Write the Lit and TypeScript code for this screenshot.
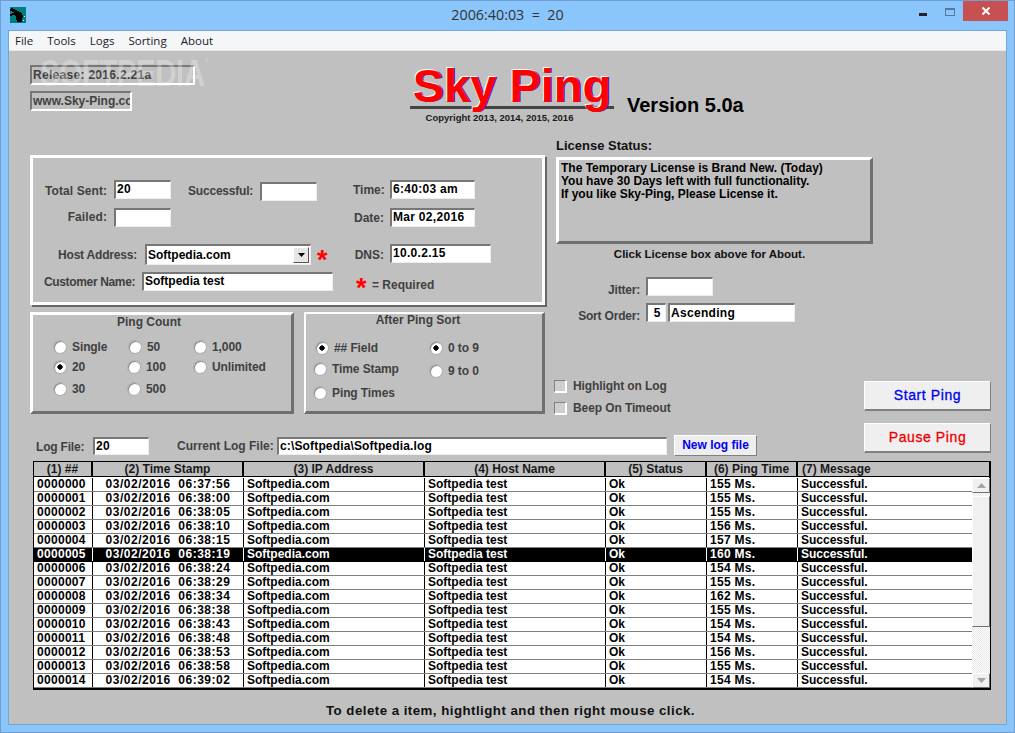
import { LitElement, html, css } from 'lit';
import { customElement } from 'lit/decorators.js';
import { classMap } from 'lit/directives/class-map.js';

const ROWS = [
  ['0000000', '03/02/2016  06:37:56', '155 Ms.'],
  ['0000001', '03/02/2016  06:38:00', '155 Ms.'],
  ['0000002', '03/02/2016  06:38:05', '155 Ms.'],
  ['0000003', '03/02/2016  06:38:10', '156 Ms.'],
  ['0000004', '03/02/2016  06:38:15', '157 Ms.'],
  ['0000005', '03/02/2016  06:38:19', '160 Ms.'],
  ['0000006', '03/02/2016  06:38:24', '154 Ms.'],
  ['0000007', '03/02/2016  06:38:29', '155 Ms.'],
  ['0000008', '03/02/2016  06:38:34', '162 Ms.'],
  ['0000009', '03/02/2016  06:38:38', '155 Ms.'],
  ['0000010', '03/02/2016  06:38:43', '154 Ms.'],
  ['0000011', '03/02/2016  06:38:48', '154 Ms.'],
  ['0000012', '03/02/2016  06:38:53', '156 Ms.'],
  ['0000013', '03/02/2016  06:38:58', '155 Ms.'],
  ['0000014', '03/02/2016  06:39:02', '154 Ms.'],
];

@customElement('app-root')
export class AppRoot extends LitElement {
  static styles = css`
    :host {
      display: block;
      width: 1015px;
      height: 733px;
      overflow: hidden;
      font-family: 'Liberation Sans', Arial, sans-serif;
      font-size: 12px;
      font-weight: 700;
      color: #000;
    }
    .dig {
      letter-spacing: 0.3px;
    }
    .window {
      box-sizing: border-box;
      width: 1015px;
      height: 733px;
      background: #8ac6fb;
      border: 1px solid #6e9fd0;
      display: flex;
      flex-direction: column;
      position: relative;
    }
    .titlebar {
      height: 29px;
      flex: none;
      display: flex;
      align-items: flex-start;
      padding-left: 9px;
    }
    .app-icon {
      width: 16px;
      height: 16px;
      margin-top: 6px;
      flex: none;
    }
    .title {
      flex: 1;
      text-align: center;
      margin: 4px 0 0 70px;
      font-family: 'Open Sans', 'Noto Sans', sans-serif;
      font-size: 14.3px;
      font-weight: 400;
      line-height: 20px;
      color: #333;
      white-space: pre;
    }
    .controls {
      display: flex;
      flex: none;
      align-items: flex-start;
      margin-right: 6px;
    }
    .min {
      width: 8px;
      height: 3px;
      background: #222;
      margin: 12px 18px 0 0;
    }
    .max {
      box-sizing: border-box;
      width: 10px;
      height: 8px;
      border: 1px solid #55789a;
      border-top-width: 2px;
      margin: 7px 8px 0 0;
    }
    .close {
      width: 45px;
      height: 20px;
      background: #c75050;
      display: flex;
      align-items: center;
      justify-content: center;
    }
    .client {
      flex: 1;
      margin: 0 7px 7px 7px;
      border: 1px solid #76a5d6;
      background: #c0c0c0;
      display: flex;
      flex-direction: column;
      min-height: 0;
    }
    .menu {
      height: 19px;
      flex: none;
      background: #f5f6f7;
      border-bottom: 1px solid #e8e8e8;
      display: flex;
      gap: 14px;
      padding-left: 6px;
      align-items: center;
      font-family: 'Open Sans', 'Noto Sans', sans-serif;
      font-size: 11.5px;
      font-weight: 400;
      color: #1a1a2a;
    }
    .form {
      position: relative;
      flex: 1;
      padding: 14px 15px 0 21px;
    }
    .watermark {
      position: absolute;
      left: 31px;
      top: 3px;
      font-size: 36px;
      line-height: 40px;
      letter-spacing: -0.6px;
      color: rgba(255, 255, 255, 0.28);
      pointer-events: none;
      display: flex;
      transform: scaleX(0.82);
      transform-origin: left top;
    }
    .watermark small {
      font-size: 8px;
      line-height: 14px;
      font-weight: 400;
      letter-spacing: 0;
    }
    .header {
      height: 73px;
      display: flex;
    }
    .badges {
      width: 379px;
      flex: none;
      display: flex;
      flex-direction: column;
      gap: 6px;
    }
    .badge {
      box-sizing: border-box;
      height: 20px;
      border: 2px solid;
      border-color: #777 #fff #fff #777;
      color: #404040;
      padding-left: 1px;
      line-height: 16px;
      overflow: hidden;
      white-space: nowrap;
    }
    .badge.release {
      width: 165px;
    }
    .badge.site {
      width: 102px;
    }
    .logo {
      width: 206px;
      flex: none;
      text-align: center;
      display: flex;
      flex-direction: column;
      align-items: center;
      position: relative;
      margin-right: 12px;
    }
    .logo::before {
      content: '';
      position: absolute;
      left: 1px;
      top: 41px;
      width: 204px;
      height: 3px;
      background: #444;
    }
    .sky {
      position: relative;
      font-size: 47px;
      line-height: 46px;
      margin-top: -2px;
      color: #f00;
      text-shadow: -1px -1px 0 #fff, 1px 0 0 #2a00c0;
      white-space: nowrap;
    }
    .copy {
      font-size: 9.5px;
      line-height: 12px;
      margin: 3px 25px 0 0;
      color: #1a1a1a;
    }
    .version {
      font-size: 20px;
      line-height: 22px;
      margin-top: 29px;
      color: #000;
    }
    .main {
      display: flex;
    }
    .upper {
      width: 834px;
      flex: none;
    }
    .columns {
      display: flex;
      height: 297px;
    }
    .left {
      width: 516px;
      flex: none;
      margin-right: 10px;
      padding-top: 17px;
    }
    .lbl {
      color: #404040;
      white-space: nowrap;
      flex: none;
    }
    .input {
      box-sizing: border-box;
      height: 19px;
      background: #fff;
      border: 2px solid;
      border-color: #777 #eee #eee #777;
      border-right-width: 1px;
      border-bottom-width: 1px;
      color: #000;
      line-height: 15px;
      padding-left: 1px;
      white-space: nowrap;
      overflow: hidden;
      flex: none;
    }
    .status {
      box-sizing: border-box;
      width: 515px;
      height: 150px;
      background: #c0c0c0;
      border: 3px solid #fff;
      box-shadow: 2px 2px 0 #666;
      display: flex;
    }
    .status-left {
      width: 320px;
      flex: none;
      padding-top: 22px;
    }
    .status-right {
      padding-top: 22px;
    }
    .row {
      display: flex;
      align-items: center;
    }
    .status-left .row {
      height: 18px;
    }
    .r-sent {
      padding-left: 12px;
    }
    .r-failed {
      margin-top: 10px;
      padding-left: 12px;
    }
    .w-label-a {
      width: 62px;
      text-align: right;
      margin-right: 7px;
      letter-spacing: 0.1px;
    }
    .r-sent .lbl {
      margin-top: 4px;
    }
    .w-56 {
      width: 57px;
    }
    .r-sent .low {
      margin-top: 4px;
    }
    .r-sent .succ {
      margin: 4px 7px 0 17px;
      width: 65px;
      letter-spacing: -0.2px;
    }
    .status-left .r-host {
      height: 21px;
      margin-top: 18px;
    }
    .host-label {
      width: 104px;
      text-align: right;
      margin-right: 8px;
      letter-spacing: -0.2px;
    }
    .combo {
      box-sizing: border-box;
      width: 166px;
      height: 21px;
      background: #fff;
      border: 2px solid;
      border-color: #777 #eee #eee #777;
      border-right-width: 1px;
      border-bottom-width: 1px;
      display: flex;
      align-items: center;
      flex: none;
    }
    .combo span {
      flex: 1;
      padding: 0 0 1px 1px;
    }
    .combo-btn {
      box-sizing: border-box;
      width: 16px;
      height: 16px;
      margin-right: 1px;
      background: #e6e6e6;
      border: 1px solid;
      border-color: #fff #555 #555 #fff;
      display: flex;
      align-items: center;
      justify-content: center;
    }
    .star {
      color: #f00;
      font-size: 27px;
      line-height: 19px;
      height: 13px;
      width: 13px;
      flex: none;
      overflow: visible;
    }
    .star-host {
      margin: 6px 0 0 6px;
    }
    .status-left .r-customer {
      height: 19px;
      margin-top: 7px;
      padding-left: 11px;
    }
    .cust-label {
      width: 91px;
      margin-right: 7px;
      letter-spacing: -0.35px;
    }
    .w-191 {
      width: 191px;
    }
    .status-right .row {
      height: 18px;
    }
    .time-label {
      width: 31px;
      text-align: right;
      margin: 2px 6px 0 0;
    }
    .w-85 {
      width: 85px;
    }
    .w-101 {
      width: 101px;
    }
    .status-right .r-date {
      margin-top: 10px;
    }
    .status-right .r-dns {
      margin-top: 18px;
      height: 19px;
    }
    .status-right .r-req {
      margin-top: 13px;
      padding-left: 3px;
    }
    .req-label {
      margin-left: 3px;
    }
    .panels {
      display: flex;
      gap: 10px;
      margin-top: 7px;
    }
    .panel {
      box-sizing: border-box;
      height: 102px;
      border: 3px solid;
      border-color: #fff #707070 #707070 #fff;
      color: #404040;
    }
    .panel-title {
      line-height: 16px;
      text-align: center;
      white-space: nowrap;
    }
    .ping {
      width: 264px;
    }
    .ping .panel-title {
      width: 232px;
      margin-top: -1px;
    }
    .ping-grid {
      display: grid;
      grid-template-columns: 74px 66px auto;
      grid-template-rows: 20px 20px 24px;
      padding-left: 21px;
      margin-top: 7px;
    }
    .radio {
      display: flex;
      align-items: center;
      gap: 6px;
      white-space: nowrap;
      letter-spacing: -0.1px;
    }
    .dot {
      width: 12px;
      height: 12px;
      border-radius: 50%;
      flex: none;
      background: #fff;
      box-shadow: inset 1px 1px 0 #8a8a8a, 0 0 0 1px #b0b0b0;
    }
    .dot.on {
      background: radial-gradient(circle at 50% 50%, #000 2.4px, #fff 2.9px);
    }
    .shift {
      padding-left: 1px;
    }
    .sort {
      width: 241px;
      border-left-width: 2px;
      border-top-width: 2px;
    }
    .sort .panel-title {
      width: 224px;
      margin-top: -2px;
    }
    .sort-body {
      display: flex;
      margin-top: 10px;
    }
    .sort-a {
      width: 116px;
      padding-left: 8px;
      display: grid;
      grid-template-rows: 20px 22px 26px;
    }
    .sort-b {
      display: grid;
      grid-template-rows: 20px 26px;
    }
    .indent {
      padding-left: 2px;
    }
    .aside {
      flex: 1;
      color: #404040;
    }
    .lic-title {
      line-height: 16px;
      color: #111;
      font-size: 13px;
    }
    .license {
      box-sizing: border-box;
      margin-top: 3px;
      width: 317px;
      height: 87px;
      border: 3px solid;
      border-color: #fff #707070 #707070 #fff;
      padding: 2px 0 0 2px;
      color: #000;
      line-height: 13px;
      white-space: nowrap;
    }
    .lic-hint {
      width: 307px;
      text-align: center;
      line-height: 16px;
      margin-top: 2px;
      color: #111;
      font-size: 11.5px;
    }
    .jit {
      margin-top: 15px;
      height: 19px;
    }
    .sorder {
      margin-top: 7px;
      height: 19px;
    }
    .sorder .input {
      line-height: 17px;
    }
    .right-label {
      width: 84px;
      text-align: right;
      margin: 6px 6px 0 0;
      letter-spacing: -0.2px;
    }
    .w-67 {
      width: 67px;
    }
    .w-20 {
      width: 20px;
      text-align: center;
    }
    .w-127 {
      width: 127px;
      margin-left: 2px;
    }
    .checks {
      margin-top: 58px;
      display: flex;
      flex-direction: column;
      gap: 9px;
    }
    .check {
      display: flex;
      align-items: center;
      gap: 6px;
      height: 13px;
      margin-left: -2px;
      letter-spacing: -0.1px;
    }
    .check-text {
      margin-bottom: 2px;
    }
    .box {
      box-sizing: border-box;
      width: 13px;
      height: 13px;
      border: 2px solid;
      border-color: #808080 #fff #fff #808080;
      border-top-width: 1px;
      border-left-width: 1px;
      background: #cfcfcf;
    }
    .log-row {
      display: flex;
      align-items: center;
      height: 21px;
      padding-left: 6px;
      color: #404040;
    }
    .log-label {
      width: 48px;
      margin: 2px 9px 0 0;
      letter-spacing: -0.2px;
    }
    .log-row .input {
      height: 18px;
    }
    .w-55 {
      width: 56px;
    }
    .cur-label {
      width: 93px;
      margin: 0 7px 0 28px;
    }
    .w-390 {
      width: 390px;
      letter-spacing: 0.15px;
    }
    .new-log {
      box-sizing: border-box;
      margin-left: 7px;
      width: 83px;
      height: 21px;
      border: 1px solid;
      border-color: #fff #808080 #808080 #fff;
      background: #eee;
      color: #0000f0;
      text-align: center;
      line-height: 19px;
    }
    .actions {
      flex: none;
      width: 127px;
      padding-top: 243px;
      display: flex;
      flex-direction: column;
      gap: 12px;
    }
    .btn {
      box-sizing: border-box;
      height: 30px;
      border: 1px solid;
      border-color: #fff #808080 #808080 #fff;
      border-bottom-width: 2px;
      background: #efefef;
      text-align: center;
      font-size: 14px;
      line-height: 27px;
      font-weight: 400;
      letter-spacing: 0.6px;
      -webkit-text-stroke: 0.3px currentColor;
    }
    .btn.start {
      color: #0000f0;
    }
    .btn.pause {
      color: #f00000;
    }
    .grid {
      box-sizing: border-box;
      width: 958px;
      height: 229px;
      margin: 5px 0 0 3px;
      border: 1px solid #000;
      border-right-width: 2px;
      border-bottom-width: 2px;
      display: flex;
      flex-direction: column;
    }
    .cols {
      display: grid;
      grid-template-columns: 59px 151px 181px 181px 101px 91px 1fr;
    }
    .grid-head {
      height: 14px;
      flex: none;
      border-bottom: 1px solid #000;
      line-height: 14px;
      color: #1a1a1a;
    }
    .grid-head > div {
      text-align: center;
      border-right: 2px solid #000;
      white-space: nowrap;
    }
    .grid-head > div:last-child {
      border-right: 0;
      text-align: left;
      padding-left: 4px;
    }
    .grid-body {
      flex: 1;
      display: flex;
      min-height: 0;
      border-top: 1px solid #fff;
    }
    .rows {
      width: 938px;
      flex: none;
      background: #fff;
    }
    .line {
      box-sizing: border-box;
      height: 14px;
      border-bottom: 1px solid #808080;
      line-height: 13px;
      white-space: pre;
    }
    .line > div {
      border-right: 1px solid #000;
      padding-left: 3px;
      overflow: hidden;
    }
    .line > div:last-child {
      border-right: 0;
    }
    .line > .center {
      text-align: center;
      padding-left: 0;
      letter-spacing: 0.5px;
    }
    .line.sel {
      background: #000;
      color: #fff;
      border-bottom-color: #000;
    }
    .line.sel > div {
      border-right-color: #fff;
    }
    .scroll {
      flex: none;
      width: 18px;
      display: flex;
      flex-direction: column;
      background: repeating-conic-gradient(#fff 0 25%, #e6e6e6 0 50%) 0 0 / 2px 2px;
    }
    .sb {
      box-sizing: border-box;
      flex: none;
      border: 1px solid;
      border-color: #fff #707070 #707070 #fff;
      background: #f0f0f0;
      display: flex;
      align-items: center;
      justify-content: center;
    }
    .sb-up,
    .sb-down {
      height: 15px;
    }
    .thumb {
      height: 131px;
      margin-top: 3px;
    }
    .spacer {
      flex: 1;
    }
    .hint {
      text-align: center;
      margin-top: 13px;
      font-size: 13.3px;
      line-height: 16px;
      letter-spacing: 0.46px;
      color: #111;
    }
  `;

  private input(cls: string, value = '') {
    return html`<div class="input ${cls}">${value}</div>`;
  }

  private radio(label: string, on = false, cls = '') {
    return html`<div class="radio ${cls}">
      <span class=${classMap({ dot: true, on })}></span><span>${label}</span>
    </div>`;
  }

  render() {
    return html`
      <div class="window">
        <div class="titlebar">
          <svg class="app-icon" viewBox="0 0 16 16" shape-rendering="crispEdges">
            <rect width="16" height="16" fill="#008080" />
            <path
              fill="#000"
              d="M1 1h2v1h2v1h2v1h2v1h2v1h1v2h1v3h-1v4h-5v-2h-1v-4h-1v-1h-3v1h-2v-2h2v-1h2v-1h-2v-1h-2z"
            />
            <path fill="#fff" d="M14 9h1v1h-1zM13 13h1v1h-1z" />
          </svg>
          <div class="title">2006:40:03  =  20</div>
          <div class="controls">
            <div class="min"></div>
            <div class="max"></div>
            <div class="close">
              <svg width="8" height="8" viewBox="0 0 8 8">
                <path d="M0.5 0.5L7.5 7.5M7.5 0.5L0.5 7.5" stroke="#fff" stroke-width="2" />
              </svg>
            </div>
          </div>
        </div>

        <div class="client">
          <div class="menu">
            <span>File</span><span>Tools</span><span>Logs</span><span>Sorting</span><span>About</span>
          </div>

          <div class="form">
            <div class="header">
              <div class="badges">
                <div class="badge release dig">Release: 2016.2.21a</div>
                <div class="badge site">www.Sky-Ping.com</div>
              </div>
              <div class="logo">
                <div class="sky">Sky Ping</div>
                <div class="copy">Copyright 2013, 2014, 2015, 2016</div>
              </div>
              <div class="version">Version 5.0a</div>
            </div>

            <div class="main">
              <div class="upper">
                <div class="columns">
                  <div class="left">
                    <div class="status">
                      <div class="status-left">
                        <div class="row r-sent">
                          <span class="lbl w-label-a">Total Sent:</span>
                          ${this.input('w-56 dig', '20')}
                          <span class="lbl succ">Successful:</span>
                          ${this.input('w-56 low')}
                        </div>
                        <div class="row r-failed">
                          <span class="lbl w-label-a">Failed:</span>
                          ${this.input('w-56')}
                        </div>
                        <div class="row r-host">
                          <span class="lbl host-label">Host Address:</span>
                          <div class="combo">
                            <span>Softpedia.com</span>
                            <div class="combo-btn">
                              <svg width="7" height="4" viewBox="0 0 7 4"><path d="M0 0h7L3.5 4z" fill="#000" /></svg>
                            </div>
                          </div>
                          <span class="star star-host">*</span>
                        </div>
                        <div class="row r-customer">
                          <span class="lbl cust-label">Customer Name:</span>
                          ${this.input('w-191', 'Softpedia test')}
                        </div>
                      </div>
                      <div class="status-right">
                        <div class="row">
                          <span class="lbl time-label">Time:</span>
                          ${this.input('w-85 dig', '6:40:03 am')}
                        </div>
                        <div class="row r-date">
                          <span class="lbl time-label">Date:</span>
                          ${this.input('w-85 dig', 'Mar 02,2016')}
                        </div>
                        <div class="row r-dns">
                          <span class="lbl time-label">DNS:</span>
                          ${this.input('w-101 dig', '10.0.2.15')}
                        </div>
                        <div class="row r-req">
                          <span class="star">*</span>
                          <span class="lbl req-label">= Required</span>
                        </div>
                      </div>
                    </div>

                    <div class="panels">
                      <div class="panel ping">
                        <div class="panel-title">Ping Count</div>
                        <div class="ping-grid">
                          ${this.radio('Single')} ${this.radio('50', false, 'shift')} ${this.radio('1,000')}
                          ${this.radio('20', true)} ${this.radio('100')} ${this.radio('Unlimited')}
                          ${this.radio('30')} ${this.radio('500')}
                        </div>
                      </div>
                      <div class="panel sort">
                        <div class="panel-title">After Ping Sort</div>
                        <div class="sort-body">
                          <div class="sort-a">
                            ${this.radio('## Field', true, 'indent')} ${this.radio('Time Stamp')}
                            ${this.radio('Ping Times')}
                          </div>
                          <div class="sort-b">${this.radio('0 to 9', true)} ${this.radio('9 to 0')}</div>
                        </div>
                      </div>
                    </div>
                  </div>

                  <div class="aside">
                    <div class="lic-title">License Status:</div>
                    <div class="license">
                      The Temporary License is Brand New. (Today)<br />
                      You have 30 Days left with full functionality.<br />
                      If you like Sky-Ping, Please License it.
                    </div>
                    <div class="lic-hint">Click License box above for About.</div>
                    <div class="row jit">
                      <span class="lbl right-label">Jitter:</span>
                      ${this.input('w-67')}
                    </div>
                    <div class="row sorder">
                      <span class="lbl right-label">Sort Order:</span>
                      ${this.input('w-20', '5')} ${this.input('w-127 dig', 'Ascending')}
                    </div>
                    <div class="checks">
                      <div class="check"><span class="box"></span><span class="check-text">Highlight on Log</span></div>
                      <div class="check"><span class="box"></span><span class="check-text">Beep On Timeout</span></div>
                    </div>
                  </div>
                </div>

                <div class="log-row">
                  <span class="lbl log-label">Log File:</span>
                  ${this.input('w-55 dig', '20')}
                  <span class="lbl cur-label">Current Log File:</span>
                  ${this.input('w-390', 'c:\\Softpedia\\Softpedia.log')}
                  <div class="new-log">New log file</div>
                </div>
              </div>

              <div class="actions">
                <div class="btn start">Start Ping</div>
                <div class="btn pause">Pause Ping</div>
              </div>
            </div>

            <div class="grid">
              <div class="cols grid-head">
                <div>(1) ##</div>
                <div>(2) Time Stamp</div>
                <div>(3) IP Address</div>
                <div>(4) Host Name</div>
                <div>(5) Status</div>
                <div>(6) Ping Time</div>
                <div>(7) Message</div>
              </div>
              <div class="grid-body">
                <div class="rows">
                  ${ROWS.map(
                    (r, i) => html`<div class=${classMap({ cols: true, line: true, sel: i === 5 })}>
                      <div class="dig">${r[0]}</div>
                      <div class="center">${r[1]}</div>
                      <div>Softpedia.com</div>
                      <div>Softpedia test</div>
                      <div>Ok</div>
                      <div class="dig">${r[2]}</div>
                      <div>Successful.</div>
                    </div>`,
                  )}
                </div>
                <div class="scroll">
                  <div class="sb sb-up">
                    <svg width="9" height="5" viewBox="0 0 9 5"><path d="M4.5 0L9 5H0z" fill="#a6a6a6" /></svg>
                  </div>
                  <div class="sb thumb"></div>
                  <div class="spacer"></div>
                  <div class="sb sb-down">
                    <svg width="9" height="5" viewBox="0 0 9 5"><path d="M0 0h9L4.5 5z" fill="#a6a6a6" /></svg>
                  </div>
                </div>
              </div>
            </div>

            <div class="hint">To delete a item, hightlight and then right mouse click.</div>

            <div class="watermark">SOFTPEDIA<small>®</small></div>
          </div>
        </div>
      </div>
    `;
  }
}
